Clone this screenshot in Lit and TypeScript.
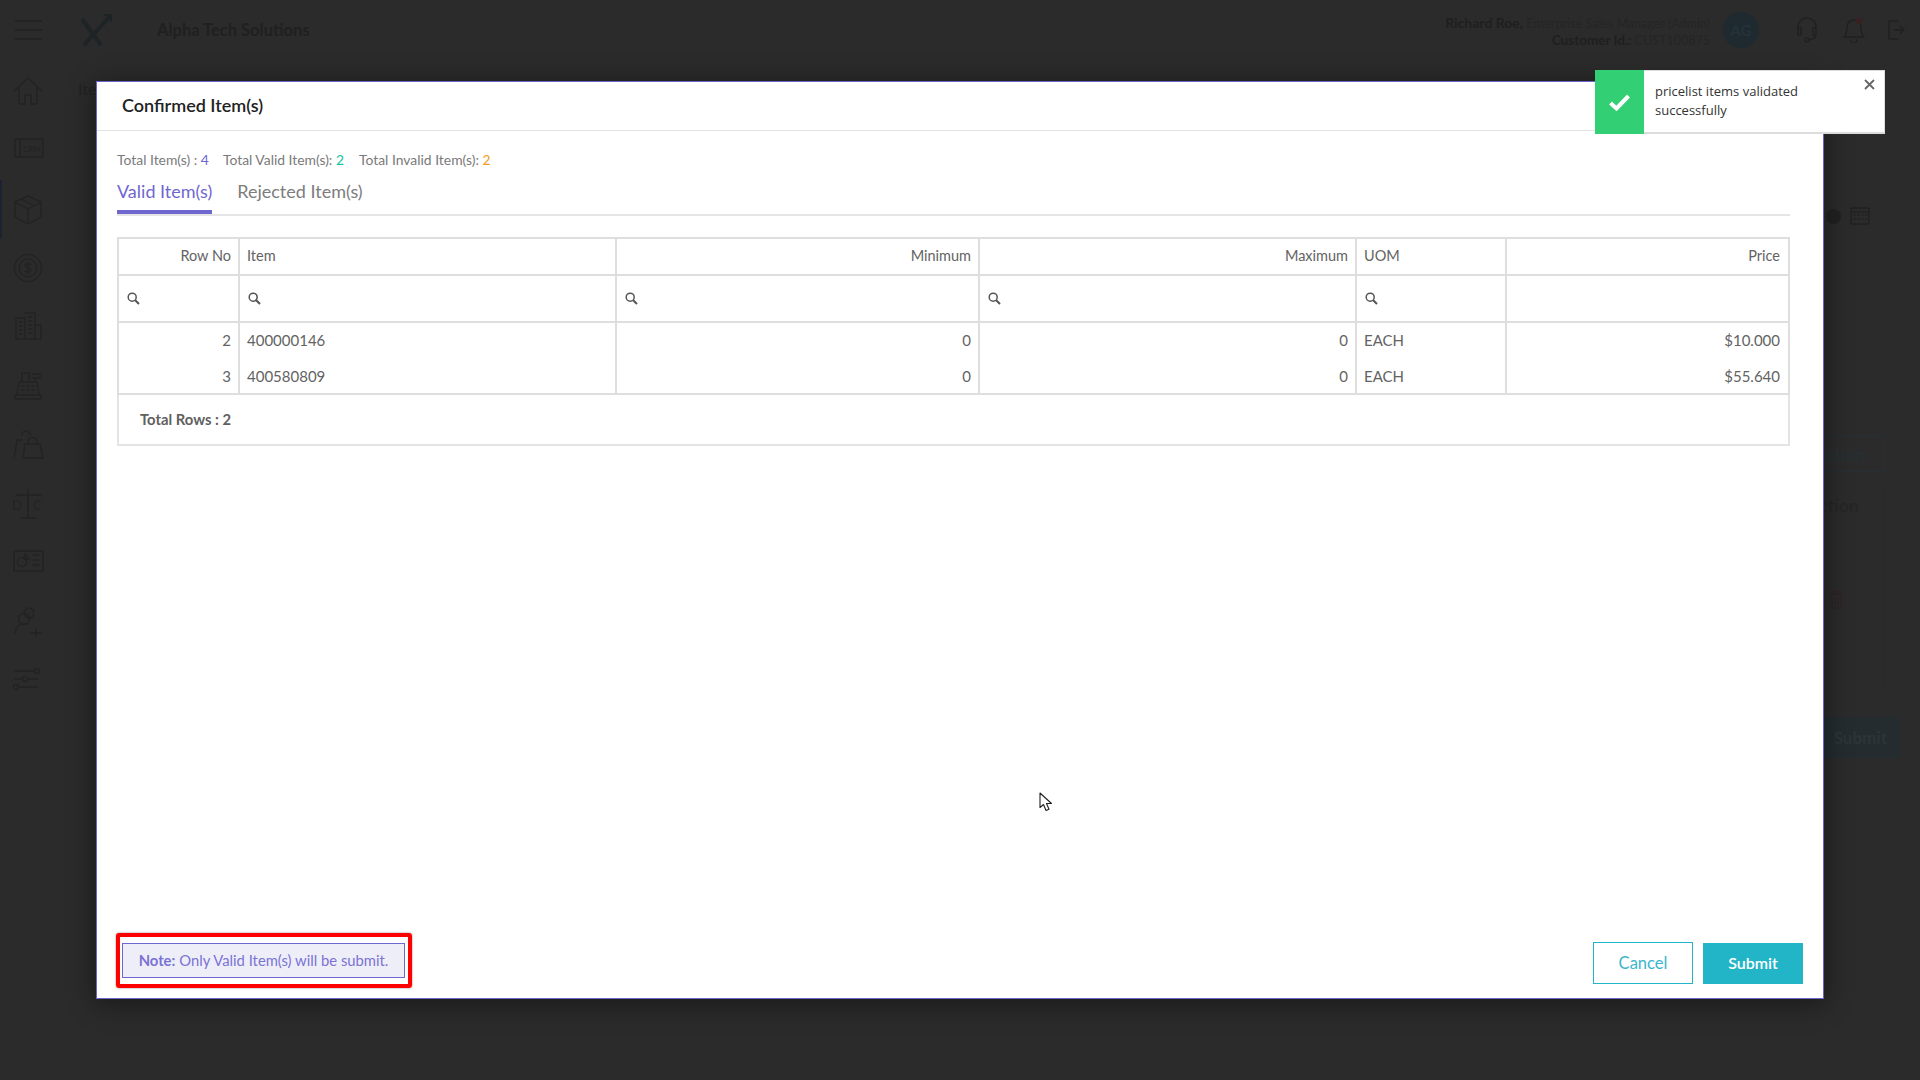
import { LitElement, html, css, svg } from "lit";
import { customElement } from "lit/decorators.js";

const stroke = (w: number, h: number, body: unknown, cls = "") => html`<svg class=${cls} width=${w} height=${h} viewBox="0 0 ${w} ${h}" fill="none" stroke="currentColor" stroke-width="1.5" stroke-linecap="round" stroke-linejoin="round">${body}</svg>`;

const sideIcons = [
  svg`<path d="M1 15 15 2l14 13M6 11v17h6v-9h6v9h6V11"/>`,
  svg`<path d="M2 4h28v18H2zM7 4v18"/><text x="10" y="17" font-size="8" fill="currentColor" stroke="none" font-family="Lato, sans-serif" font-weight="700">CRM</text>`,
  svg`<path d="M15 2 28 8v15l-13 7-13-7V8zM2 8l13 7 13-7M15 15v15M8 5l13 7"/>`,
  svg`<circle cx="15" cy="15" r="13.5"/><circle cx="15" cy="15" r="9"/><path d="M18 11.5c-1-1.500-6-1.500-6 1s6 2 6 4.500-5 2.500-6 1M15 9v12"/>`,
  svg`<path d="M3 6h9v21H3zM12 1h10v26H12M22 13h6v14h-6M6 10h3M6 14h3M6 18h3M6 22h3M15 5h4M15 9h4M15 13h4M15 17h4M15 21h4"/>`,
  svg`<path d="M2 24h26v4H2zM4 24 6 11h18l2 13M9 11V2h7v9M19 3h8v4h-8M22 7v4M9 15h2M14 15h2M19 15h2M8 19h3M14 19h2M19 19h3"/>`,
  svg`<path d="M1 28 4 10h5M9 5a4 4 0 0 1 8 0M10 28 12 14h15l3 14zM15 14v-2a4.500 4.500 0 0 1 9 0v2"/>`,
  svg`<path d="M15 1v27M8 29h15M3 6h25"/><text x="-1" y="21" font-size="13" fill="currentColor" stroke="none" font-family="Lato, sans-serif">D</text><text x="20" y="21" font-size="13" fill="currentColor" stroke="none" font-family="Lato, sans-serif">C</text>`,
  svg`<path d="M1 3h29v20H1z"/><circle cx="9" cy="14" r="4.500"/><path d="M12 6l4 5h-5zM20 7h6M20 12h6M20 17h6"/>`,
  svg`<circle cx="16" cy="6" r="5"/><circle cx="11" cy="12" r="5.500"/><path d="M2 27c0-9 7-11 12-10M23 22v9M18 26h10"/>`,
  svg`<path d="M2 5h20M2 13h8M15 13h10M5 21h20"/><circle cx="24" cy="5" r="2.500"/><circle cx="12" cy="13" r="2.500"/><circle cx="3" cy="21" r="2.500"/>`,
];

const search = html`<svg class="mag" width="13" height="13" viewBox="0 0 13 13" fill="none" stroke="currentColor"><circle cx="5.200" cy="5.200" r="4" stroke-width="1.500"/><path d="M8.200 8.200 12 12" stroke-width="2"/></svg>`;

const cols = [
  { head: "Row No", right: true, filter: true, rows: ["2", "3"] },
  { head: "Item", right: false, filter: true, rows: ["400000146", "400580809"] },
  { head: "Minimum", right: true, filter: true, rows: ["0", "0"] },
  { head: "Maximum", right: true, filter: true, rows: ["0", "0"] },
  { head: "UOM", right: false, filter: true, rows: ["EACH", "EACH"] },
  { head: "Price", right: true, filter: false, rows: ["$10.000", "$55.640"] },
];

@customElement("app-root")
export class AppRoot extends LitElement {
  static styles = css`
    :host { display: block; width: 1920px; height: 1080px; position: relative; overflow: hidden; background: #2b2b2b; font-family: Lato, "Liberation Sans", sans-serif; color: #555; }
    * { box-sizing: border-box; }
    .app { height: 1080px; display: flex; flex-direction: column; color: #212121; }
    .topbar { height: 60px; display: flex; align-items: center; flex: none; padding-left: 15px; }
    .burger { width: 27px; display: flex; flex-direction: column; gap: 7px; margin-right: 39px; }
    .burger i { display: block; height: 2px; background: #232323; }
    .logo { margin-right: 45px; color: #1e2326; }
    .brand { font-size: 16.500px; font-weight: 700; color: #202020; }
    .user { margin-left: auto; text-align: right; font-size: 12.500px; line-height: 17px; color: #252525; padding-top: 3px; white-space: nowrap; }
    .user b { color: #1f1f1f; font-size: 14px; }
    .user b.id { font-size: 13.500px; }
    .avatar { width: 36px; height: 36px; border-radius: 50%; background: #1e2a30; color: #253238; display: flex; align-items: center; justify-content: center; font-weight: 700; font-size: 15px; margin: 0 37px 0 13px; }
    .ticon { color: #212121; margin-right: 25px; display: block; }
    .ticon.bell { margin-right: 23px; }
    .ticon.last { margin-right: 15px; }
    .content { flex: 1; display: flex; }
    .side { width: 72px; flex: none; padding: 16px 0 0 13px; display: flex; flex-direction: column; gap: 29px; position: relative; color: #232323; }
    .side svg { display: block; width: 31px; height: 30px; }
    .marker { position: absolute; left: 0; top: 120px; width: 2px; height: 58px; background: #1d2230; }
    .main { flex: 1; display: flex; justify-content: space-between; }
    .crumb { padding: 19px 0 0 6px; font-size: 16px; color: #222; }
    .tools { width: 96px; flex: none; display: flex; flex-direction: column; color: #222; font-size: 18px; }
    .dates { display: flex; gap: 9px; padding: 147px 0 0 2px; align-items: center; }
    .xdot { width: 15px; height: 15px; border-radius: 50%; background: #212121; }
    .act-head { margin-top: 211px; width: 60px; height: 36px; border: 1px solid #262f33; color: #263034; display: flex; align-items: center; justify-content: flex-end; padding-right: 17px; }
    .act-col { margin-top: 16px; width: 60px; height: 206px; border-right: 1px solid #292929; display: flex; flex-direction: column; }
    .act-cell { height: 34px; flex: none; display: flex; align-items: center; justify-content: flex-end; padding-right: 24px; color: #252525; border-bottom: 1px solid #292929; }
    .trash { margin: 68px 0 0 6px; color: #2f2426; }
    .sub-bg { margin-top: 23px; width: 76px; height: 41px; background: #242c30; color: #2e3437; font-weight: 700; font-size: 17px; display: flex; align-items: center; justify-content: flex-end; padding-right: 13px; }

    .modal { position: absolute; left: 96px; top: 81px; width: 1728px; height: 918px; background: #fff; border: 1px solid #6c65c9; box-shadow: 0 4px 26px rgba(0,0,0,.45); display: flex; flex-direction: column; }
    .mhead { height: 49px; flex: none; border-bottom: 1px solid #e2e2e2; padding: 0 0 2px 25px; display: flex; align-items: center; font-size: 18px; font-weight: 600; color: #222; }
    .mbody { flex: 1; padding: 0 33px 0 20px; }
    .stats { display: flex; gap: 14px; padding-top: 20px; font-size: 13.900px; line-height: 18px; color: #7a7a7a; }
    .stats .third { margin-left: 1px; }
    .c4 { color: #6f67d0; } .c2 { color: #18c2a2; } .co { color: #f49c24; }
    .tabs { display: flex; gap: 25px; margin-top: 10px; border-bottom: 2px solid #e5e5e5; height: 37px; font-size: 18px; color: #7d7d7d; }
    .tab { height: 35px; line-height: 24px; }
    .tab.on { color: #6f67d0; border-bottom: 4px solid #6f67d0; }
    .grid { margin-top: 21px; border: 2px solid #dedede; border-bottom: none; display: grid; grid-template-columns: 121px 377px 363px 377px 150px 281px; font-size: 15px; color: #636363; }
    .cell { display: flex; align-items: center; border-right: 2px solid #dedede; padding: 0 7px 0 7px; }
    .cell.r { justify-content: flex-end; }
    .cell:nth-child(6n) { border-right: none; padding-right: 8px; }
    .h { height: 37px; border-bottom: 2px solid #dedede; padding-bottom: 3px; font-size: 14.500px; }
    .f { height: 47px; border-bottom: 2px solid #dedede; padding-left: 8px; color: #555; }
    .d { height: 36px; padding-bottom: 2px; box-shadow: inset 0 -1px 0 #fff; }
    .d.l { height: 36px; padding-bottom: 0; box-shadow: none; border-bottom: 2px solid #dedede; }
    .gfoot { height: 51px; border: solid #e4e4e4; border-width: 0 2px 2px 2px; padding: 0 0 2px 21px; display: flex; align-items: center; font-size: 14.800px; font-weight: 700; color: #606060; }
    .mag { display: block; color: #555; }
    .mfoot { display: flex; justify-content: space-between; align-items: flex-start; padding: 0 20px 14px 25px; height: 56px; flex: none; }
    .note { position: relative; margin-top: 1px; height: 35px; width: 283px; padding-bottom: 2px; background: #eeeef9; border: 1px solid #6f67d0; color: #7a73d3; font-size: 14.800px; display: flex; align-items: center; justify-content: center; }
    .note b { font-weight: 700; margin-right: 4px; }
    .mark { position: absolute; left: -7px; top: -11px; width: 296px; height: 55px; border: 4px solid #f00; border-radius: 3px; box-shadow: 0 0 2px #777; pointer-events: none; }
    .btns { display: flex; gap: 10px; align-items: flex-end; height: 42px; }
    .btn { width: 100px; height: 41px; display: flex; align-items: center; justify-content: center; font-size: 16.500px; font-family: inherit; padding: 0 0 1px; }
    .btn.o { height: 42px; background: #fff; border: 1px solid #22b5c8; color: #3cb6cc; }
    .btn.p { background: #22b5c8; color: #fff; border: none; font-weight: 600; font-size: 16px; padding-bottom: 3px; }

    .toast { position: absolute; left: 1595px; top: 70px; width: 290px; height: 64px; background: #fff; border: solid #dcdcdc; border-width: 1px 1px 2px 0; display: flex; }
    .tcheck { width: 49px; margin-top: -1px; margin-bottom: -2px; background: #33cf74; display: flex; align-items: center; justify-content: center; flex: none; }
    .tmsg { padding: 11px 0 0 11px; line-height: 19px; color: #333; font-family: "Open Sans", sans-serif; font-size: 13px; flex: 1; }
    .tclose { margin: 8px 9px 0 0; color: #666; display: block; }
    .cursor { position: absolute; left: 1039px; top: 792px; display: block; }
  `;

  render() {
    return html`
      <div class="app">
        <div class="topbar">
          <div class="burger"><i></i><i></i><i></i></div>
          <svg class="logo" width="31" height="33" viewBox="0 0 31 33" fill="none" stroke="currentColor" stroke-width="4"><path d="M1 5 20 31"/><path d="M3 31 29 2"/><path d="M23 1h7v7" stroke-width="2"/></svg>
          <div class="brand">Alpha Tech Solutions</div>
          <div class="user"><b>Richard Roe,</b> Enterprise Sales Manager (Admin)<br /><b class="id">Customer Id.:</b> CUST100875</div>
          <div class="avatar">AG</div>
          ${stroke(22, 26, svg`<path d="M2 15V10a9 9 0 0 1 18 0v5M2 11h3v7H2zM17 11h3v7h-3zM19 18v3l-6 2"/><circle cx="11" cy="23" r="2"/>`, "ticon")}
          ${stroke(22, 26, svg`<path d="M1 20c3-3 3-6 3-10a7 7 0 0 1 14 0c0 4 0 7 3 10zM8 23a3 3 0 0 0 6 0"/><circle cx="16" cy="4" r="3" fill="#3a2020" stroke="none"/>`, "ticon bell")}
          ${stroke(17, 20, svg`<path d="M10 1H1v18h9M6 10h10M12 6l4 4-4 4"/>`, "ticon last")}
        </div>
        <div class="content">
          <div class="side">
            <div class="marker"></div>
            ${sideIcons.map((b) => html`<svg viewBox="0 0 31 30" fill="none" stroke="currentColor" stroke-width="1.400" stroke-linecap="round" stroke-linejoin="round">${b}</svg>`)}
          </div>
          <div class="main">
            <div class="crumb">Ite</div>
            <div class="tools">
              <div class="dates">
                <div class="xdot"></div>
                ${stroke(20, 18, svg`<path d="M1 1h18v16H1zM1 5h18M4 8h1M8 8h1M12 8h1M16 8h1M4 12h1M8 12h1M12 12h1M16 12h1"/>`)}
              </div>
              <div class="act-head">Action</div>
              <div class="act-col">
                <div class="act-cell">Action</div>
                ${stroke(13, 19, svg`<path d="M1 4h11M4 4V1h5v3M2 4v14h9V4M5 8v7M8 8v7"/>`, "trash")}
              </div>
              <div class="sub-bg">Submit</div>
            </div>
          </div>
        </div>
      </div>

      <div class="modal">
        <div class="mhead">Confirmed Item(s)</div>
        <div class="mbody">
          <div class="stats">
            <span>Total Item(s) : <span class="c4">4</span></span>
            <span>Total Valid Item(s): <span class="c2">2</span></span>
            <span class="third">Total Invalid Item(s): <span class="co">2</span></span>
          </div>
          <div class="tabs"><div class="tab on">Valid Item(s)</div><div class="tab">Rejected Item(s)</div></div>
          <div class="grid">
            ${cols.map((c) => html`<div class="cell h ${c.right ? "r" : ""}">${c.head}</div>`)}
            ${cols.map((c) => html`<div class="cell f">${c.filter ? search : ""}</div>`)}
            ${cols.map((c) => html`<div class="cell d ${c.right ? "r" : ""}">${c.rows[0]}</div>`)}
            ${cols.map((c) => html`<div class="cell d l ${c.right ? "r" : ""}">${c.rows[1]}</div>`)}
          </div>
          <div class="gfoot">Total Rows : 2</div>
        </div>
        <div class="mfoot">
          <div class="note"><b>Note:</b> Only Valid Item(s) will be submit.<div class="mark"></div></div>
          <div class="btns"><button class="btn o">Cancel</button><button class="btn p">Submit</button></div>
        </div>
      </div>

      <div class="toast">
        <div class="tcheck"><svg width="21" height="17" viewBox="0 0 21 17" fill="none" stroke="#fff" stroke-width="4"><path d="M1.500 9 7.500 14.500 19.500 2"/></svg></div>
        <div class="tmsg">pricelist items validated successfully</div>
        <svg class="tclose" width="11" height="11" viewBox="0 0 11 11" fill="none" stroke="currentColor" stroke-width="1.800"><path d="M1 1l9 9M10 1l-9 9"/></svg>
      </div>

      <svg class="cursor" width="14" height="21" viewBox="0 0 14 21"><path d="M1 1v14.500l3.500-3 2.500 6 3-1.300-2.500-5.700H12.500z" fill="#fff" stroke="#222" stroke-width="1.100" stroke-linejoin="round"/></svg>
    `;
  }
}
